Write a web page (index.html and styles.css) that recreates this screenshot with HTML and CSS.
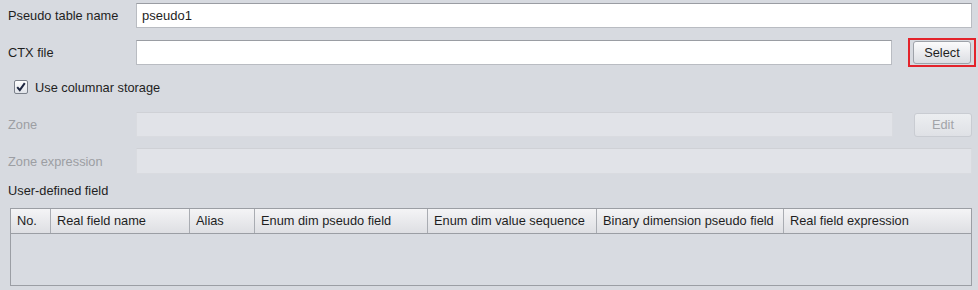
FILE: index.html
```html
<!DOCTYPE HTML>
<html>
<head>
<meta http-equiv="Content-Type" content="text/html; charset=utf-8">
<title>Pseudo table</title>
<link rel="stylesheet" href="styles.css">
</head>
<body>
	<div class="panel">
		<div class="row r1">
			<span class="lbl">Pseudo table name</span>
			<div class="field">pseudo1</div>
		</div>
		<div class="row r2">
			<span class="lbl">CTX file</span>
			<div class="field"></div>
			<span class="mark"><span class="btn">Select</span></span>
		</div>
		<div class="row r3">
			<svg class="chk" width="14" height="14" viewBox="0 0 14 14">
				<defs>
					<linearGradient id="cg" x1="0" y1="0" x2="0" y2="1">
						<stop offset="0" stop-color="#ffffff"/>
						<stop offset="1" stop-color="#dfe2e8"/>
					</linearGradient>
				</defs>
				<rect x="0.5" y="0.5" width="13" height="13" rx="1.5" fill="url(#cg)" stroke="#7b808a"/>
				<path d="M3.2 7.2 L5.8 10.2 L10.8 3.2" fill="none" stroke="#1d2640" stroke-width="2"/>
			</svg>
			<span class="chk-text">Use columnar storage</span>
		</div>
		<div class="row r4">
			<span class="lbl off">Zone</span>
			<div class="field dis"></div>
			<span class="btn off">Edit</span>
		</div>
		<div class="row r5">
			<span class="lbl off">Zone expression</span>
			<div class="field dis"></div>
		</div>
		<div class="caption">User-defined field</div>
		<div class="grid">
			<div class="head">
				<span style="width:40px">No.</span>
				<span style="width:139px">Real field name</span>
				<span style="width:65px">Alias</span>
				<span style="width:173px">Enum dim pseudo field</span>
				<span style="width:169px">Enum dim value sequence</span>
				<span style="width:187px">Binary dimension pseudo field</span>
				<span class="last">Real field expression</span>
			</div>
		</div>
	</div>
</body>
</html>
```

FILE: styles.css
```css
body { margin: 0; padding: 0; background: #d7dae0; font-family: "Liberation Sans", Arial, sans-serif; font-size: 12.8px; color: #1e1e1e; }
.panel { width: 978px; height: 290px; padding: 0 6px 0 8px; box-sizing: border-box; overflow: hidden; }
.row { display: flex; align-items: center; }
.r1 { margin-top: 3px; height: 25px; }
.r2 { margin-top: 12px; height: 25px; }
.r3 { margin-top: 14px; height: 16px; padding-left: 6px; }
.r4 { margin-top: 17px; height: 25px; }
.r5 { margin-top: 11px; height: 26px; }
.lbl { width: 128px; flex: none; }
.lbl.off { color: #9c9ea3; }
.field { flex: 1; height: 100%; box-sizing: border-box; background: #fff; border: 1px solid #b9bcc2; border-top-color: #9a9da3; padding-left: 5px; line-height: 23px; font-size: 13px; }
.field.dis { background: #e1e3e8; border-color: #d9dbe0; border-top-color: #cfd1d6; }
.btn { display: block; flex: none; width: 58px; height: 23px; box-sizing: border-box; border: 1px solid #9ea2a9; border-radius: 3px; background: linear-gradient(#fbfbfc, #dcdee3); text-align: center; line-height: 21px; }
.btn.off { height: 24px; margin-left: 21px; border-color: #c9ccd2; background: linear-gradient(#eceef1, #dfe1e6); color: #a2a4a8; line-height: 22px; }
.mark { flex: none; margin-left: 16px; margin-right: -4px; padding: 1px 3px; border: 2px solid #e3232b; }
.chk { flex: none; }
.chk-text { margin-left: 7px; }
.caption { margin-top: 10px; height: 14px; line-height: 14px; }
.grid { margin: 10px 0 0 2px; height: 78px; box-sizing: border-box; border: 1px solid #9b9ea4; background: #d8dbe1; }
.head { display: flex; height: 24px; border-bottom: 1px solid #9b9ea4; background: linear-gradient(#f4f4f6, #dedfe3); }
.head span { flex: none; box-sizing: border-box; padding-left: 6px; line-height: 24px; border-right: 1px solid #a9acb2; white-space: nowrap; }
.head span.last { flex: 1; border-right: 0; }
```
